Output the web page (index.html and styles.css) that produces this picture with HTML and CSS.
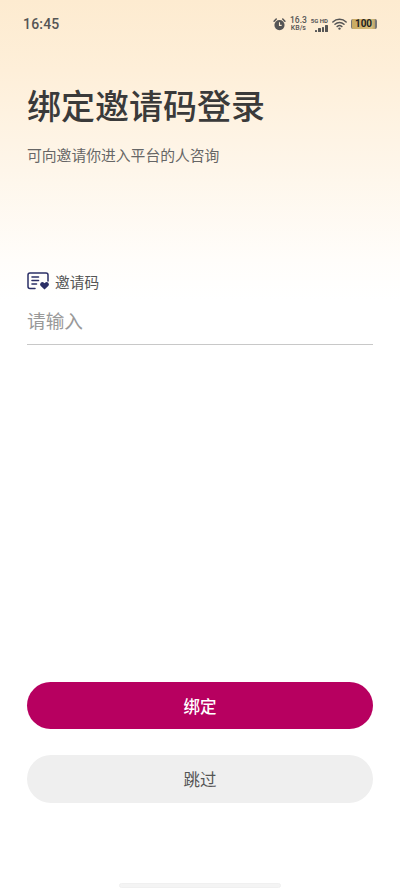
FILE: index.html
```html
<!DOCTYPE html>
<html lang="zh">
<head>
<meta charset="utf-8">
<title>绑定邀请码登录</title>
<link rel="stylesheet" href="styles.css">
</head>
<body>
<div class="page">
  <header class="status">
    <span class="time">16:45</span>
    <div class="status-icons">
      <svg class="i-alarm" viewBox="0 0 12 12" width="13" height="13"><circle cx="6" cy="6.500" r="4.700" fill="#555"/><path d="M1 3 3 1M11 3 9 1" stroke="#555" stroke-width="1.400" stroke-linecap="round"/><path d="M6 4v2.800h2" stroke="#fdebd0" stroke-width="1" fill="none"/></svg>
      <div class="speed"><span>16.3</span><span class="speed-unit">KB/s</span></div>
      <div class="signal">
        <span class="sig-label">5G HD</span>
        <div class="bars"><i class="b1"></i><i class="b2"></i><i class="b3"></i><i class="b4"></i></div>
      </div>
      <svg class="i-wifi" viewBox="0 0 14 11" width="15" height="12"><path d="M.8 3.600a9 9 0 0 1 12.400 0M2.800 5.800a6.200 6.200 0 0 1 8.400 0M4.800 7.900a3.400 3.400 0 0 1 4.400 0" fill="none" stroke="#555" stroke-width="1.400" stroke-linecap="round"/><circle cx="7" cy="9.800" r="1.100" fill="#555"/></svg>
      <div class="battery"><span>100</span></div>
    </div>
  </header>

  <main class="content">
    <h1 class="title">绑定邀请码登录</h1>
    <p class="subtitle">可向邀请你进入平台的人咨询</p>

    <div class="field">
      <div class="field-label">
        <svg viewBox="0 0 23 18" width="23" height="18"><path d="M8 16.500H3a2 2 0 0 1-2-2V3a2 2 0 0 1 2-2h16a2 2 0 0 1 2 2v6" fill="none" stroke="#2b2f66" stroke-width="1.500" stroke-linecap="round"/><path d="M5 5h6.500M5 8.500h6.500M5 12h4.500" stroke="#2b2f66" stroke-width="1.600" stroke-linecap="round"/><path d="M17.500 17.500l-4-3.700a2.300 2.300 0 0 1 3.200-3.200l.8.700.8-.7a2.300 2.300 0 0 1 3.200 3.200z" fill="#2b2f66"/></svg>
        <span>邀请码</span>
      </div>
      <div class="field-input">请输入</div>
    </div>
  </main>

  <div class="actions">
    <button class="btn btn-primary" type="button">绑定</button>
    <button class="btn btn-secondary" type="button">跳过</button>
  </div>

  <div class="home-bar"></div>
</div>
</body>
</html>
```

FILE: styles.css
```css
* { box-sizing: border-box; }
html, body { margin: 0; padding: 0; }
body {
  width: 400px;
  height: 889px;
  overflow: hidden;
  background: #fff;
  font-family: "Noto Sans CJK SC", "Noto Sans", Roboto, sans-serif;
}
.page {
  width: 400px;
  height: 889px;
  display: flex;
  flex-direction: column;
  background: linear-gradient(180deg, #fdebd0 0, #feefd9 70px, #fef6ea 170px, #fffdfa 260px, #fff 300px);
}
.status {
  height: 48px;
  padding: 0 23px;
  display: flex;
  align-items: center;
  justify-content: space-between;
  color: #555;
}
.time {
  font-family: Roboto, sans-serif;
  font-size: 14px;
  font-weight: 500;
  letter-spacing: .2px;
}
.status-icons { display: flex; align-items: center; gap: 4px; }
.speed {
  display: flex;
  flex-direction: column;
  align-items: center;
  gap: 1px;
  font-family: Roboto, sans-serif;
  font-size: 8.500px;
  line-height: 7px;
  font-weight: 500;
}
.speed-unit { font-size: 7px; line-height: 6px; }
.signal { display: flex; flex-direction: column; align-items: center; gap: 1px; }
.sig-label { font-family: Roboto, sans-serif; font-size: 6px; line-height: 7px; font-weight: 700; white-space: nowrap; }
.bars { display: flex; align-items: flex-end; gap: 1px; height: 7px; margin-left: 4px; }
.bars i { display: block; width: 2.500px; background: #555; border-radius: .5px; }
.b1 { height: 2px; }
.b2 { height: 3.500px; }
.b3 { height: 5px; }
.b4 { height: 7px; }
.battery {
  width: 26px;
  height: 10px;
  border-radius: 2px;
  background: linear-gradient(90deg, #c9ab62, #d8bd7c 85%, #b8a069);
  border-left: 1px solid #777;
  border-right: 2px solid #777;
  display: flex;
  align-items: center;
  justify-content: center;
  font-family: Roboto, sans-serif;
  font-size: 10px;
  line-height: 10px;
  font-weight: 700;
  color: #222;
}
.content { flex: 1; padding: 0 27px; min-height: 0; }
.title {
  margin: 33px 0 0;
  font-size: 34px;
  line-height: 48px;
  font-weight: 500;
  color: #3a3a3a;
}
.subtitle {
  margin: 15px 0 0;
  font-size: 14.800px;
  line-height: 22px;
  color: #666;
}
.field { margin-top: 104px; }
.field-label {
  display: flex;
  align-items: center;
  gap: 5px;
  height: 22px;
  font-size: 14.700px;
  color: #555;
}
.field-input {
  margin-top: 14px;
  height: 39px;
  border-bottom: 1px solid #c8c8c8;
  font-size: 18.700px;
  line-height: 27px;
  color: #999;
}
.actions {
  display: flex;
  flex-direction: column;
  gap: 26px;
  padding: 0 27px;
}
.btn {
  height: 47px;
  border: 0;
  border-radius: 24px;
  font-family: inherit;
  font-size: 16.500px;
  padding: 0;
}
.btn-primary { background: #b70060; color: #fff; font-weight: 500; }
.btn-secondary { background: #efefef; color: #555; height: 48px; }
.home-bar {
  width: 162px;
  height: 5px;
  margin: 80px auto 1px;
  background: #f4f4f4;
  border: 1px solid #f0f0f0;
  border-radius: 3px;
}
```
